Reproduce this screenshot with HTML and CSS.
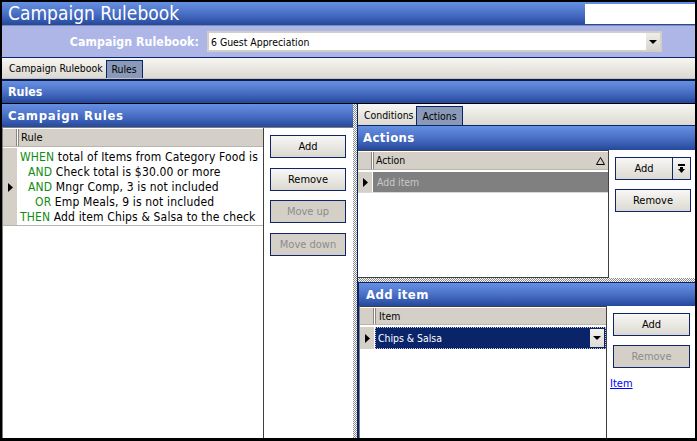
FILE: index.html
```html
<!DOCTYPE html>
<html>
<head>
<meta charset="utf-8">
<link rel="stylesheet" href="styles.css">
</head>
<body>
<div class="window">
  <div class="titlebar">
    <span class="title">Campaign Rulebook</span>
    <div class="title-box"></div>
  </div>
  <div class="rb-bar">
    <span class="rb-label">Campaign Rulebook:</span>
    <div class="combo">
      <span class="combo-text">6 Guest Appreciation</span>
      <span class="combo-btn"><svg width="8" height="4" viewBox="0 0 8 4"><polygon points="0,0 8,0 4,4" fill="#000"/></svg></span>
    </div>
  </div>
  <div class="tabstrip top-tabs">
    <span class="tab">Campaign Rulebook</span>
    <span class="tab sel">Rules</span>
  </div>
  <div class="band-header rules-header">Rules</div>
  <div class="main">
    <div class="left-panel">
      <div class="panel-header main-header">Campaign Rules</div>
      <div class="panel-body">
        <div class="grid rules-grid">
          <div class="grid-head">
            <div class="rh"></div>
            <div class="col">Rule</div>
          </div>
          <div class="grid-row rule-row">
            <div class="rh"><svg width="5" height="9" viewBox="0 0 5 9"><polygon points="0,0 5,4.5 0,9" fill="#000"/></svg></div>
            <div class="cell rule-lines">
              <div class="ln"><span class="kw">WHEN</span> total of Items from Category Food is</div>
              <div class="ln ind1"><span class="kw">AND</span> Check total is $30.00 or more</div>
              <div class="ln ind1"><span class="kw">AND</span> Mngr Comp, 3 is not included</div>
              <div class="ln ind2"><span class="kw">OR</span> Emp Meals, 9 is not included</div>
              <div class="ln"><span class="kw">THEN</span> Add item Chips &amp; Salsa to the check</div>
            </div>
          </div>
        </div>
        <div class="btn-col left-btns">
          <div class="btn">Add</div>
          <div class="btn">Remove</div>
          <div class="btn disabled">Move up</div>
          <div class="btn disabled">Move down</div>
        </div>
      </div>
    </div>
    <div class="vsplit"></div>
    <div class="right-panel">
      <div class="tabstrip sub-tabs">
        <span class="tab">Conditions</span>
        <span class="tab sel">Actions</span>
      </div>
      <div class="actions-panel">
        <div class="panel-header sub-header">Actions</div>
        <div class="sub-body actions-body">
          <div class="grid actions-grid">
            <div class="grid-head">
              <div class="rh"></div>
              <div class="col col-flex">Action<svg class="sort" width="9" height="8" viewBox="0 0 9 8"><polygon points="0.5,7.5 4.5,0.5 8.5,7.5" fill="none" stroke="#000" stroke-width="1"/></svg></div>
            </div>
            <div class="grid-row action-row">
              <div class="rh"><svg width="5" height="9" viewBox="0 0 5 9"><polygon points="0,0 5,4.5 0,9" fill="#000"/></svg></div>
              <div class="cell action-cell">Add item</div>
            </div>
          </div>
          <div class="btn-col right-btns">
            <div class="btn split">
              <span class="split-main">Add</span>
              <span class="split-arrow"><svg width="7" height="10" viewBox="0 0 7 10"><rect x="0" y="0" width="7" height="2" fill="#000"/><rect x="2" y="3" width="3" height="3" fill="#000"/><polygon points="0,5 7,5 3.5,9" fill="#000"/></svg></span>
            </div>
            <div class="btn">Remove</div>
          </div>
        </div>
      </div>
      <div class="hsplit"></div>
      <div class="additem-panel">
        <div class="panel-header sub-header additem-header">Add item</div>
        <div class="sub-body additem-body">
          <div class="grid item-grid">
            <div class="grid-head">
              <div class="rh"></div>
              <div class="col">Item</div>
            </div>
            <div class="grid-row item-row">
              <div class="rh"><svg width="5" height="9" viewBox="0 0 5 9"><polygon points="0,0 5,4.5 0,9" fill="#000"/></svg></div>
              <div class="cell item-cell">
                <span>Chips &amp; Salsa</span>
                <span class="cell-btn"><svg width="8" height="4" viewBox="0 0 8 4"><polygon points="0,0 8,0 4,4" fill="#000"/></svg></span>
              </div>
            </div>
          </div>
          <div class="btn-col item-btns">
            <div class="btn">Add</div>
            <div class="btn disabled">Remove</div>
            <a class="link" href="#">Item</a>
          </div>
        </div>
      </div>
    </div>
  </div>
</div>
</body>
</html>
```

FILE: styles.css
```css
* { box-sizing: border-box; }
html, body { margin: 0; padding: 0; }
body {
  background: #000;
  font-family: "DejaVu Sans Condensed", "DejaVu Sans", sans-serif;
  font-size: 10.4px;
  color: #000;
}
.window {
  width: 697px;
  height: 441px;
  border-style: solid;
  border-color: #000;
  border-width: 2px 2px 3px 2px;
  background: #fff;
  display: flex;
  flex-direction: column;
  overflow: hidden;
}
.titlebar {
  height: 24px;
  flex: none;
  display: flex;
  justify-content: space-between;
  align-items: flex-start;
  background: linear-gradient(#6690e2, #4a70c6 50%, #24489b);
  border-bottom: 1px solid #7f8cb4;
}
.title {
  color: #fff;
  font-size: 19px;
  line-height: 23px;
  padding-left: 6px;
}
.title-box {
  width: 110px;
  height: 20px;
  margin-top: 2px;
  background: #fff;
}
.rb-bar {
  height: 32px;
  flex: none;
  display: flex;
  align-items: center;
  background: #adb6e7;
  border-bottom: 1px solid #0a246a;
}
.rb-label {
  width: 197px;
  text-align: right;
  color: #fff;
  font-weight: bold;
  font-size: 12.2px;
  letter-spacing: 0.1px;
}
.combo {
  margin-left: 8px;
  width: 455px;
  height: 21px;
  background: #fff;
  border: 2px solid #d2cfc8;
  display: flex;
  align-items: center;
  justify-content: space-between;
}
.combo-text {
  padding-left: 2px;
}
.combo-btn {
  width: 14px;
  height: 17px;
  background: linear-gradient(#eeede9, #d9d6ce);
  display: flex;
  align-items: center;
  justify-content: center;
}
.tabstrip {
  flex: none;
  display: flex;
  align-items: flex-end;
  background: linear-gradient(#f7f6f2, #dcd9d1);
}
.top-tabs {
  height: 21px;
  padding-left: 4px;
  border-bottom: 1px solid #c4c2bc;
}
.tab {
  height: 18px;
  line-height: 17px;
  padding: 0 3px;
}
.tab.sel {
  background: #8b99b9;
  border: 1px solid #0a246a;
  border-bottom: none;
  padding: 0 5px;
}
.band-header {
  flex: none;
  color: #fff;
  font-weight: bold;
  font-size: 12.3px;
  background: linear-gradient(#6690e2, #4a70c6 50%, #24489b);
}
.rules-header {
  height: 25px;
  line-height: 22px;
  padding-left: 6px;
  border-top: 2px solid #0c1c50;
  border-bottom: 1px solid #000;
}
.main {
  flex: 1;
  display: flex;
  min-height: 0;
}
.left-panel {
  width: 351px;
  flex: none;
  display: flex;
  flex-direction: column;
}
.panel-header {
  flex: none;
  height: 24px;
  line-height: 23px;
  padding-left: 6px;
  color: #fff;
  font-weight: bold;
  font-size: 13px;
  background: linear-gradient(#6690e2, #4a70c6 50%, #24489b);
  border-bottom: 1px solid #808080;
}
.main-header { letter-spacing: 0.7px; }
.panel-body {
  flex: 1;
  display: flex;
  background: #fff;
}
.grid {
  display: flex;
  flex-direction: column;
  background: #fff;
}
.rules-grid {
  width: 262px;
  border-left: 1px solid #808080;
  border-right: 1px solid #404040;
  padding-top: 1px;
}
.grid-head {
  height: 18px;
  display: flex;
  background: #d4d0c8;
  border-bottom: 1px solid #b8b5ae;
  flex: none;
}
.rh {
  width: 15px;
  flex: none;
  background: #d4d0c8;
  display: flex;
  align-items: center;
  justify-content: center;
  border-right: 1px solid #fff;
}
.grid-head .rh {
  border-right: 1px solid #fff;
  box-shadow: inset -1px 0 #8a8780;
}
.col {
  flex: 1;
  line-height: 17px;
  padding-left: 2px;
  border-left: 1px solid #8a8780;
}
.rules-grid .col { font-size: 11px; }
.col-flex {
  display: flex;
  align-items: center;
  justify-content: space-between;
  padding-right: 3px;
}
.grid-row {
  display: flex;
  flex: none;
}
.rule-row {
  margin-top: 1px;
  height: 78px;
  border-bottom: 1px solid #b8b5ae;
}
.rule-row .rh { padding-top: 2px; }
.cell { flex: 1; }
.rule-lines {
  padding-top: 2px;
  padding-left: 2px;
  font-size: 12px;
  letter-spacing: 0.15px;
}
.ln {
  height: 15px;
  line-height: 15px;
  white-space: nowrap;
}
.ind1 { padding-left: 8px; }
.ind2 { padding-left: 15px; }
.kw { color: #108c10; }
.btn-col {
  display: flex;
  flex-direction: column;
  align-items: flex-start;
}
.left-btns {
  padding: 7px 0 0 6px;
  gap: 9.5px;
}
.btn {
  width: 76px;
  height: 23px;
  border: 1px solid #0f2568;
  background: linear-gradient(#f8f7f4, #dcd9d1);
  display: flex;
  align-items: center;
  justify-content: center;
  flex: none;
  font-size: 11px;
}
.btn.disabled {
  background: #d4d0c8;
  color: #8c8c8c;
}
.vsplit {
  width: 4px;
  flex: none;
  background: repeating-conic-gradient(#8a8a8a 0 25%, #ffffff 0 50%) 0 0 / 2px 2px;
}
.right-panel {
  flex: 1;
  display: flex;
  flex-direction: column;
  border-left: 1px solid #0a246a;
  min-width: 0;
}
.sub-tabs {
  height: 22px;
  padding-left: 3px;
  border-bottom: 1px solid #0a246a;
}
.sub-tabs .tab { height: 19px; line-height: 18px; }
.actions-panel {
  flex: none;
  display: flex;
  flex-direction: column;
}
.sub-header {
  height: 24px;
  line-height: 24px;
  padding-left: 5px;
  border-bottom: none;
  letter-spacing: 0.4px;
}
.sub-body {
  display: flex;
  background: #fff;
}
.actions-body { height: 128px; }
.actions-grid {
  width: 251px;
  border-top: 1px solid #404040;
  border-right: 1px solid #404040;
  border-bottom: 1px solid #404040;
  padding-top: 1px;
}
.action-row {
  margin-top: 2px;
  height: 21px;
}
.action-cell {
  background: #808080;
  color: #c8c8c8;
  line-height: 20px;
  padding-left: 4px;
  border-bottom: 1px solid #d8d8d8;
}
.action-row .rh { border-bottom: 1px solid #d8d8d8; }
.sort { display: block; }
.right-btns {
  padding: 7px 0 0 6px;
  gap: 9px;
}
.split {
  justify-content: space-between;
  padding: 0;
}
.split-main {
  flex: 1;
  text-align: center;
}
.split-arrow {
  width: 18px;
  height: 100%;
  border-left: 1px solid #0f2568;
  display: flex;
  align-items: center;
  justify-content: center;
}
.hsplit {
  height: 4px;
  flex: none;
  background: repeating-conic-gradient(#8a8a8a 0 25%, #ffffff 0 50%) 0 0 / 2px 2px;
}
.additem-panel {
  flex: 1;
  display: flex;
  flex-direction: column;
  border-top: 1px solid #0a246a;
  border-left: 1px solid #0a246a;
  min-height: 0;
}
.additem-header {
  height: 23px;
  line-height: 23px;
  padding-left: 7px;
}
.additem-body { flex: 1; }
.item-grid {
  width: 248px;
  border-top: 1px solid #404040;
  border-right: 1px solid #404040;
  border-left: 1px solid #808080;
  padding-top: 1px;
}
.item-grid .grid-head { height: 17px; }
.item-grid .col { line-height: 16px; padding-left: 3px; }
.item-row {
  margin-top: 2px;
  height: 22px;
}
.item-cell {
  background: #0a246a;
  color: #fff;
  border: 1px dotted #c8c8e0;
  display: flex;
  align-items: center;
  justify-content: space-between;
  padding-left: 2px;
  padding-right: 1px;
}
.cell-btn {
  width: 14px;
  height: 18px;
  background: linear-gradient(#f4f3ef, #dedbd3);
  display: flex;
  align-items: center;
  justify-content: center;
}
.item-btns {
  padding: 7px 0 0 6px;
  gap: 9px;
}
.item-btns .btn { width: 77px; }
.link {
  color: #0000ff;
  text-decoration: underline;
  margin-left: -3px;
  line-height: 13px;
  font-size: 11px;
}
```
